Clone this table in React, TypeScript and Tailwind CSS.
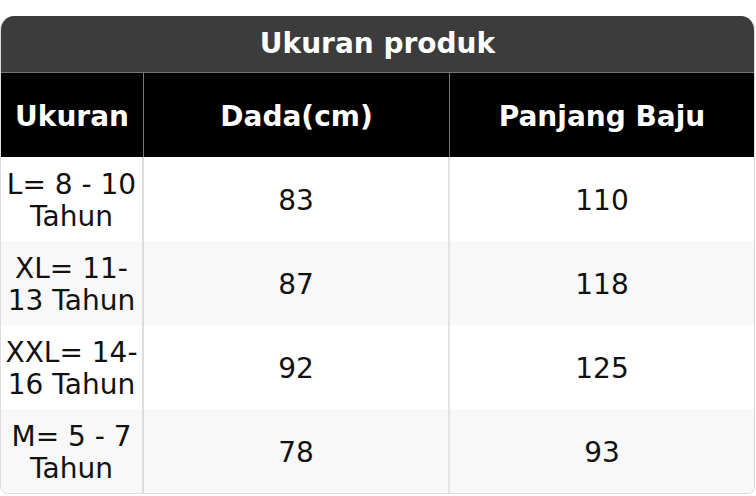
import React from "react";

const rows = [
  { u: ["L= 8 - 10", "Tahun"], d: "83", p: "110" },
  { u: ["XL= 11-", "13 Tahun"], d: "87", p: "118" },
  { u: ["XXL= 14-", "16 Tahun"], d: "92", p: "125" },
  { u: ["M= 5 - 7", "Tahun"], d: "78", p: "93" },
];

export default function App() {
  return (
    <div className="w-[756px] h-[496px] bg-white pt-4" style={{ fontFamily: '"DejaVu Sans", sans-serif' }}>
      <div className="w-[755px] rounded-t-[14px] rounded-b-[8px] overflow-hidden border border-[#dcdcdc] border-t-0">
        <div className="h-[57px] bg-[#3c3c3c] border-b border-[#777777] flex items-center justify-center text-white font-bold text-[28px]">
          Ukuran produk
        </div>
        <div className="grid grid-cols-[143px_306px_1fr] h-[84px] bg-black text-white font-bold text-[28px]">
          <div className="flex items-center justify-center border-r border-[#777777] pt-[4px]">Ukuran</div>
          <div className="flex items-center justify-center border-r border-[#777777] pt-[4px]">Dada(cm)</div>
          <div className="flex items-center justify-center pt-[4px]">Panjang Baju</div>
        </div>
        {rows.map((r, i) => (
          <div
            key={i}
            className={`grid grid-cols-[143px_306px_1fr] h-[84px] text-[28px] text-[#111111] ${i % 2 === 1 ? "bg-[#f8f8f8]" : "bg-white"}`}
          >
            <div className="flex flex-col items-center justify-center border-r-2 border-[#dddddd] leading-[32px] text-center pt-[4px]">
              <span>{r.u[0]}</span>
              <span>{r.u[1]}</span>
            </div>
            <div className="flex items-center justify-center border-r-2 border-[#e3e3e3] pt-[4px]">{r.d}</div>
            <div className="flex items-center justify-center pt-[4px]">{r.p}</div>
          </div>
        ))}
      </div>
    </div>
  );
}
